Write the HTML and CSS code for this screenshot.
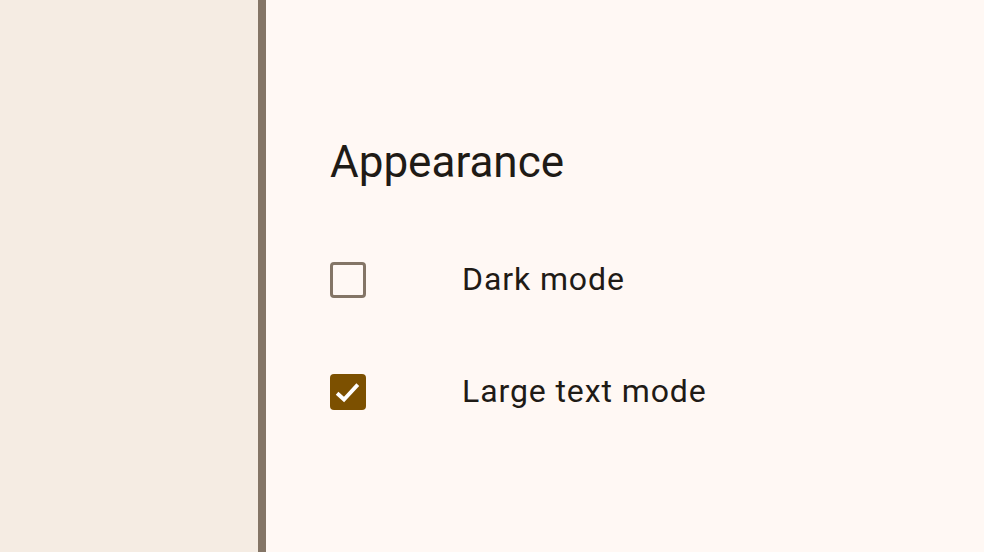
FILE: index.html
```html
<!DOCTYPE html>
<html>
<head>
<meta charset="utf-8">
<link rel="stylesheet" href="styles.css">
</head>
<body>
<div class="app">
  <aside class="sidebar"></aside>
  <main class="content">
    <h1 class="title">Appearance</h1>
    <div class="option">
      <span class="box"></span>
      <span class="label">Dark mode</span>
    </div>
    <div class="option">
      <span class="box checked">
        <svg width="36" height="36" viewBox="0 0 36 36"><path d="M8.5 20.5 L14 25.5 L26.5 12" fill="none" stroke="#fff" stroke-width="3.8" stroke-linecap="square"/></svg>
      </span>
      <span class="label">Large text mode</span>
    </div>
  </main>
</div>
</body>
</html>
```
FILE: styles.css
```css
html, body {
  margin: 0;
  padding: 0;
  height: 100%;
}
body {
  font-family: Roboto, "Noto Sans", sans-serif;
  color: #1f1b16;
}
.app {
  display: flex;
  height: 552px;
}
.sidebar {
  width: 258px;
  background: #f5ece3;
  border-right: 8px solid #847566;
  flex: none;
}
.content {
  flex: 1;
  background: #fff8f4;
  padding: 136px 0 0 64px;
}
.title {
  margin: 0 0 36px;
  font-size: 44px;
  font-weight: 400;
  line-height: 52px;
}
.option {
  display: flex;
  align-items: center;
  height: 112px;
}
.box {
  width: 36px;
  height: 36px;
  box-sizing: border-box;
  border: 3.5px solid #847566;
  border-radius: 4px;
  flex: none;
  display: block;
}
.box.checked {
  background: #7c5000;
  border: none;
}
.box svg {
  display: block;
}
.label {
  margin-left: 96px;
  padding-bottom: 2px;
  font-size: 32px;
  line-height: 40px;
  letter-spacing: 0.9px;
}
```
